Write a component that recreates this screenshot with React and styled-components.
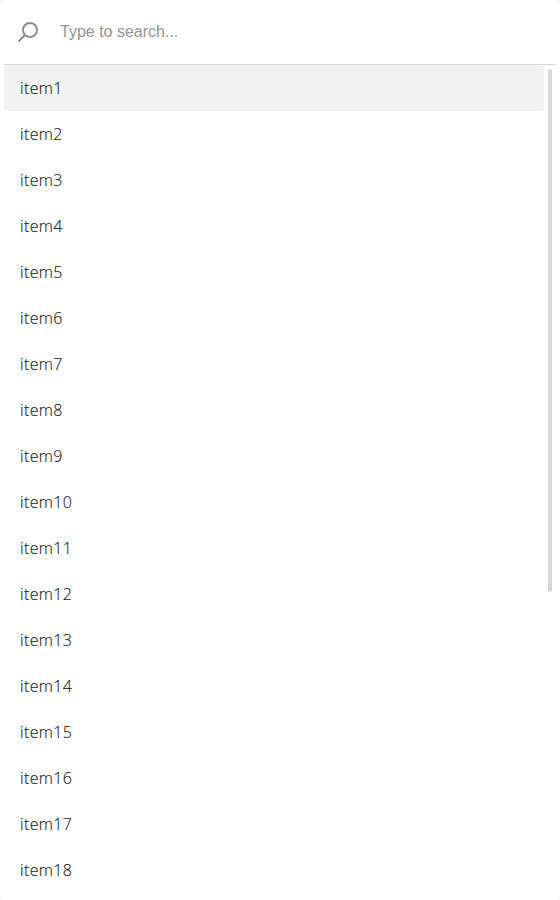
import React from "react";
import styled, { createGlobalStyle } from "styled-components";

const GlobalStyle = createGlobalStyle`
  * { box-sizing: border-box; }
  body { margin: 0; background: #f8f8f8; overflow: hidden; }
`;

const Panel = styled.div`
  display: flex;
  flex-direction: column;
  height: 900px;
  padding: 0 4px;
  background: #fff;
  border-radius: 6px;
  overflow: hidden;
`;

const SearchBar = styled.label`
  display: flex;
  align-items: center;
  flex: none;
  height: 65px;
  padding: 0 12px 1px 12px;
  border-bottom: 1px solid #d4d4d4;
`;

const SearchIcon = styled.svg`
  width: 24px;
  height: 24px;
  margin-right: 20px;
  fill: none;
  stroke: #8c8c8c;
  stroke-width: 2;
`;

const SearchInput = styled.input`
  flex: 1;
  min-width: 0;
  padding: 0;
  border: 0;
  outline: 0;
  background: transparent;
  font: 16px "Liberation Sans", Arial, sans-serif;
  color: #212121;
  &::placeholder { color: #949494; opacity: 1; }
`;

const Body = styled.div`
  display: flex;
  flex: 1;
  min-height: 0;
`;

const List = styled.ul`
  flex: 1;
  margin: 0;
  padding: 0;
  list-style: none;
`;

const Item = styled.li`
  height: 46px;
  padding: 0 16px;
  border-radius: 3px;
  background: ${(p) => (p.$active ? "#f3f3f3" : "transparent")};
  font: 300 16px/46px "Open Sans", sans-serif;
  letter-spacing: 0.35px;
  -webkit-text-stroke: 0.15px #222;
  color: #222;
`;

const ScrollTrack = styled.div`
  flex: none;
  width: 12px;
  padding: 4px;
`;

const ScrollThumb = styled.div`
  height: 523px;
  border-radius: 2px;
  background: #d6d6d6;
`;

const items = Array.from({ length: 18 }, (_, i) => `item${i + 1}`);

export default function App() {
  return (
    <>
      <GlobalStyle />
      <Panel>
        <SearchBar>
          <SearchIcon viewBox="0 0 24 24">
            <circle cx="14" cy="10" r="7" />
            <path d="M9 15L2.5 21.5" />
          </SearchIcon>
          <SearchInput placeholder="Type to search..." />
        </SearchBar>
        <Body>
          <List>
            {items.map((name, i) => (
              <Item key={name} $active={i === 0}>{name}</Item>
            ))}
          </List>
          <ScrollTrack>
            <ScrollThumb />
          </ScrollTrack>
        </Body>
      </Panel>
    </>
  );
}
